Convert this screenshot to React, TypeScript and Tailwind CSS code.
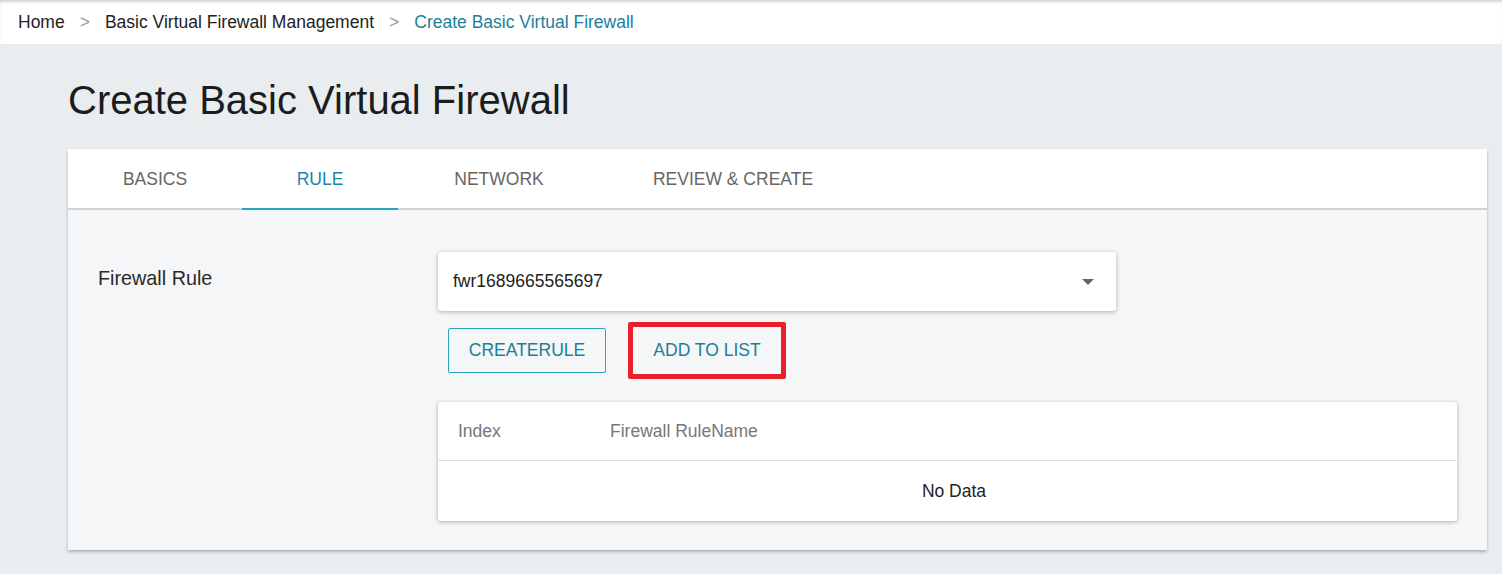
import React from "react";

const tabs = [
  { label: "BASICS", w: "w-[174px]" },
  { label: "RULE", w: "w-[156px]", active: true },
  { label: "NETWORK", w: "w-[202px]" },
  { label: "REVIEW & CREATE", w: "w-[266px]" },
];

export default function App() {
  return (
    <div className="min-h-[574px] bg-[#e9edf0] font-['Liberation_Sans',Arial,sans-serif] text-[#222]">
      {/* breadcrumb */}
      <div className="relative h-[44px] bg-white flex items-center px-[18px] text-[17.5px] shadow-[inset_0_3px_3px_-1px_rgba(0,0,0,0.18)]">
        <span className="text-[#222]">Home</span>
        <span className="mx-[15px] text-[#999]">&gt;</span>
        <span className="text-[#222]">Basic Virtual Firewall Management</span>
        <span className="mx-[15px] text-[#999]">&gt;</span>
        <span className="text-[#1b7f99]">Create Basic Virtual Firewall</span>
      </div>

      <div className="pl-[68px] pr-[15px]">
        <h1 className="pt-[31px] pb-[24px] text-[40px] leading-[50px] text-[#1c1c1c]">Create Basic Virtual Firewall</h1>

        <div className="shadow-[0_2px_3px_rgba(0,0,0,0.25)]">
          {/* tabs */}
          <div className="flex h-[61px] bg-white border-b-2 border-[#cfd2d5]">
            {tabs.map((t) => (
              <div
                key={t.label}
                className={`${t.w} flex items-center justify-center pt-[2px] text-[17.5px] ${
                  t.active ? "text-[#1b86a0] border-b-2 border-[#2aa3bd] -mb-[2px]" : "text-[#666]"
                }`}
              >
                {t.label}
              </div>
            ))}
          </div>

          {/* content */}
          <div className="bg-[#f4f6f8] flex pt-[42px] pb-[29px]">
            <div className="w-[370px] pl-[30px] pt-[12px] text-[19.8px] text-[#2a2a2a]">Firewall Rule</div>
            <div className="flex-1 pr-[30px]">
              <div className="w-[678px] h-[59px] bg-white rounded-[3px] shadow-[0_1px_4px_rgba(0,0,0,0.3)] flex items-center justify-between pl-[15px] pr-[22px] text-[17.5px] text-[#222]">
                <span>fwr1689665565697</span>
                <svg width="12" height="6" viewBox="0 0 12 6">
                  <path d="M0 0 L12 0 L6 6 Z" fill="#666" />
                </svg>
              </div>

              <div className="flex items-center mt-[11px] pl-[10px]">
                <button className="w-[158px] h-[45px] border border-[#2aa3bd] rounded-[2px] text-[17.5px] text-[#1b7f99]">
                  CREATERULE
                </button>
                <div className="ml-[22px] w-[158px] h-[57px] border-[5px] border-[#e8202a] rounded-[2px] flex items-center justify-center text-[17.5px] text-[#1b7f99]">
                  ADD TO LIST
                </div>
              </div>

              <div className="mt-[23px] bg-white rounded-[3px] shadow-[0_1px_4px_rgba(0,0,0,0.3)]">
                <div className="h-[59px] flex items-center text-[17.5px] text-[#777] border-b border-[#dedfe1]">
                  <span className="w-[172px] pl-[20px]">Index</span>
                  <span>Firewall RuleName</span>
                </div>
                <div className="h-[60px] flex items-center justify-center pl-[13px] text-[17.5px] text-[#222]">No Data</div>
              </div>
            </div>
          </div>
        </div>
      </div>
    </div>
  );
}
